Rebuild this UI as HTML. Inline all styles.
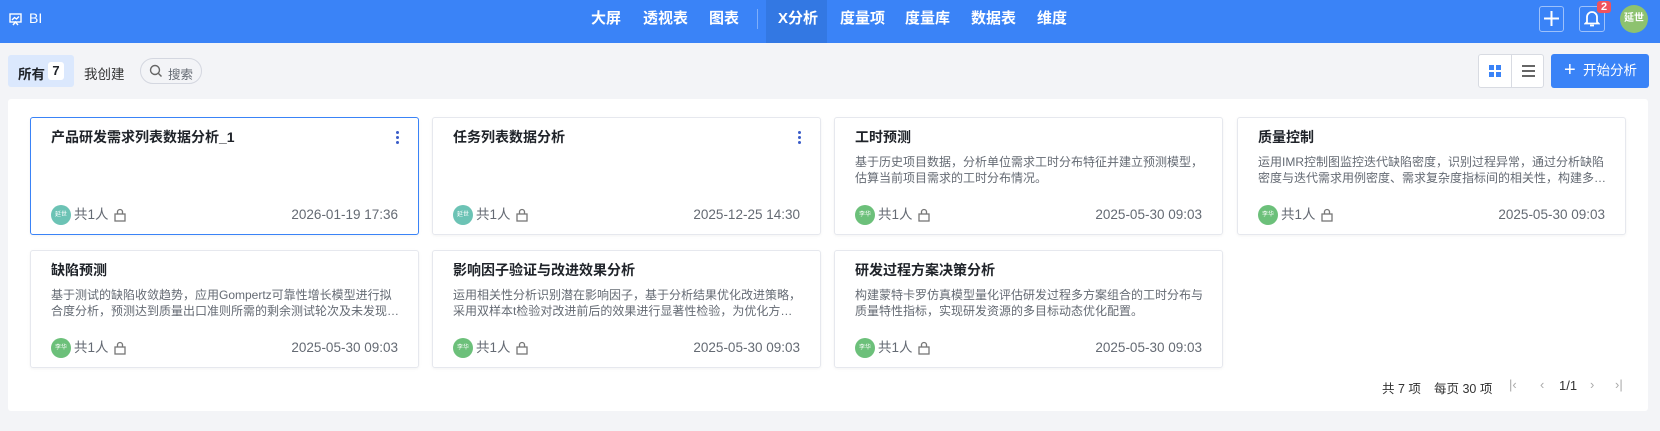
<!DOCTYPE html>
<html><head><meta charset="utf-8"><style>
*{box-sizing:border-box;margin:0;padding:0}
body{width:1660px;height:431px;background:#f3f4f7;font-family:"Liberation Sans","Noto Sans CJK SC",sans-serif;position:relative;overflow:hidden;color:#1f2329}
.hd{position:absolute;left:0;top:0;width:1660px;height:43px;background:#3a83f7;color:#fff}
.hd .nav{position:absolute;top:0;height:43px;line-height:38px;font-size:15px;font-weight:bold}
.abs{position:absolute}
.panel{position:absolute;left:8px;top:99px;width:1640px;height:312px;background:#fff;border-radius:3px}
.card{position:absolute;width:389px;height:118px;background:#fff;border:1px solid #e6e8ee;border-radius:3px;box-shadow:0 1px 3px rgba(0,0,0,.05)}
.card .t{position:absolute;left:20px;top:9px;font-size:14px;font-weight:bold;color:#1f2329}
.card .d{position:absolute;left:20px;right:16px;top:36px;font-size:12px;line-height:16px;color:#646a73;overflow:hidden;display:-webkit-box;-webkit-line-clamp:2;-webkit-box-orient:vertical}
.card .f{position:absolute;left:20px;right:20px;top:86px;height:22px;font-size:13.5px;color:#646a73;line-height:22px}
.av{display:inline-block;width:20px;height:20px;border-radius:50%;background:#6cc07a;color:#fff;font-size:6px;text-align:center;line-height:20px;vertical-align:middle;margin-right:3px}
.av.b{background:#6cc3b5}
.f .dt{position:absolute;right:0;top:0}
.lk{display:inline-block;vertical-align:middle;margin-left:4px}
.dots{position:absolute;right:19px;top:13px;width:3px}
.dots i{display:block;width:3px;height:3px;background:#3a5cc8;border-radius:50%;margin-bottom:2px}
</style></head><body>
<div class="hd">
 <svg class="abs" style="left:9px;top:13px" width="13" height="13" viewBox="0 0 13 13" fill="none" stroke="#fff" stroke-width="1.4"><rect x="1" y="1" width="11" height="8"/><path d="M3 7l2.5-2.5 2 1.5L10 3.5M4 12l2.5-3 2.5 3"/></svg>
 <div class="abs" style="left:29px;top:10px;font-size:14px">BI</div>
 <div class="nav" style="left:591px">大屏</div>
 <div class="nav" style="left:643px">透视表</div>
 <div class="nav" style="left:709px">图表</div>
 <div class="abs" style="left:757px;top:9px;width:1px;height:20px;background:rgba(255,255,255,.35)"></div>
 <div class="abs" style="left:766px;top:0;width:61px;height:43px;background:#3378e3"></div>
 <div class="nav" style="left:778px">X分析</div>
 <div class="nav" style="left:840px">度量项</div>
 <div class="nav" style="left:905px">度量库</div>
 <div class="nav" style="left:971px">数据表</div>
 <div class="nav" style="left:1037px">维度</div>
 <div class="abs" style="left:1539px;top:6px;width:25px;height:26px;border:1px solid rgba(255,255,255,.5);border-radius:3px"></div>
 <svg class="abs" style="left:1543px;top:10px" width="17" height="17"><path d="M8.5 1v15M1 8.5h15" stroke="#fff" stroke-width="2"/></svg>
 <div class="abs" style="left:1579px;top:6px;width:26px;height:26px;border:1px solid rgba(255,255,255,.5);border-radius:3px"></div>
 <svg class="abs" style="left:1584px;top:10px" width="16" height="17" fill="none" stroke="#fff" stroke-width="1.8"><path d="M3 12V7a5 5 0 0110 0v5l1.5 1.5h-13zM6 15.5h4"/></svg>
 <div class="abs" style="left:1597px;top:1px;width:14px;height:12px;background:#f0525c;border-radius:3px;font-size:11px;text-align:center;line-height:12px;font-weight:bold">2</div>
 <div class="abs" style="left:1620px;top:5px;width:28px;height:28px;border-radius:50%;background:#8dc26f;font-size:10px;text-align:center;line-height:28px;font-weight:bold">延世</div>
</div>
<div class="abs" style="left:8px;top:55px;width:66px;height:32px;background:#dbe8fd;border-radius:3px"></div>
<div class="abs" style="left:18px;top:63px;font-size:13.5px;font-weight:bold">所有</div>
<div class="abs" style="left:48px;top:62px;width:16px;height:18px;background:#fff;border-radius:3px;font-size:13px;text-align:center;line-height:18px;font-weight:bold">7</div>
<div class="abs" style="left:84px;top:63px;font-size:13.5px;color:#333">我创建</div>
<div class="abs" style="left:140px;top:58px;width:62px;height:26px;border:1px solid #d4d7e0;border-radius:13px"></div>
<svg class="abs" style="left:149px;top:64px" width="14" height="14" fill="none" stroke="#666" stroke-width="1.4"><circle cx="6" cy="6" r="4.5"/><path d="M9.5 9.5l3 3"/></svg>
<div class="abs" style="left:168px;top:64px;font-size:12.5px;color:#646a73">搜索</div>
<div class="abs" style="left:1478px;top:54px;width:66px;height:34px;background:#fff;border:1px solid #d8dbe2;border-radius:3px"></div>
<div class="abs" style="left:1511px;top:54px;width:1px;height:34px;background:#d8dbe2"></div>
<svg class="abs" style="left:1489px;top:65px" width="12" height="12" fill="#3a83f7"><rect x="0" y="0" width="5" height="5"/><rect x="7" y="0" width="5" height="5"/><rect x="0" y="7" width="5" height="5"/><rect x="7" y="7" width="5" height="5"/></svg>
<svg class="abs" style="left:1522px;top:65px" width="13" height="12" stroke="#333" stroke-width="1.5"><path d="M0 1h13M0 6h13M0 11h13"/></svg>
<div class="abs" style="left:1551px;top:54px;width:98px;height:34px;background:#3a83f7;border-radius:3px;color:#fff;font-size:13.5px;line-height:34px"><span style="font-size:20px;position:absolute;left:13px;top:-1px;font-weight:300">+</span><span style="position:absolute;left:32px">开始分析</span></div>
<div class="panel"></div>
<div class="card" style="left:30px;top:117px;border-color:#3a83f7">
 <div class="t">产品研发需求列表数据分析_1</div><div class="dots"><i></i><i></i><i></i></div>
 <div class="f"><span class="av b">延世</span>共1人<svg class="lk" width="14" height="14" fill="none" stroke="#777" stroke-width="1.3"><rect x="2" y="6" width="10" height="7"/><path d="M4.5 6V4a2.5 2.5 0 015 0v2"/></svg><span class="dt">2026-01-19 17:36</span></div></div>
<div class="card" style="left:432px;top:117px">
 <div class="t">任务列表数据分析</div><div class="dots"><i></i><i></i><i></i></div>
 <div class="f"><span class="av b">延世</span>共1人<svg class="lk" width="14" height="14" fill="none" stroke="#777" stroke-width="1.3"><rect x="2" y="6" width="10" height="7"/><path d="M4.5 6V4a2.5 2.5 0 015 0v2"/></svg><span class="dt">2025-12-25 14:30</span></div></div>
<div class="card" style="left:834px;top:117px">
 <div class="t">工时预测</div><div class="d">基于历史项目数据，分析单位需求工时分布特征并建立预测模型，估算当前项目需求的工时分布情况。</div>
 <div class="f"><span class="av">李华</span>共1人<svg class="lk" width="14" height="14" fill="none" stroke="#777" stroke-width="1.3"><rect x="2" y="6" width="10" height="7"/><path d="M4.5 6V4a2.5 2.5 0 015 0v2"/></svg><span class="dt">2025-05-30 09:03</span></div></div>
<div class="card" style="left:1237px;top:117px">
 <div class="t">质量控制</div><div class="d">运用IMR控制图监控迭代缺陷密度，识别过程异常，通过分析缺陷密度与迭代需求用例密度、需求复杂度指标间的相关性，构建多元回归模型进行预测分析。</div>
 <div class="f"><span class="av">李华</span>共1人<svg class="lk" width="14" height="14" fill="none" stroke="#777" stroke-width="1.3"><rect x="2" y="6" width="10" height="7"/><path d="M4.5 6V4a2.5 2.5 0 015 0v2"/></svg><span class="dt">2025-05-30 09:03</span></div></div>
<div class="card" style="left:30px;top:250px">
 <div class="t">缺陷预测</div><div class="d">基于测试的缺陷收敛趋势，应用Gompertz可靠性增长模型进行拟合度分析，预测达到质量出口准则所需的剩余测试轮次及未发现缺陷数量。</div>
 <div class="f"><span class="av">李华</span>共1人<svg class="lk" width="14" height="14" fill="none" stroke="#777" stroke-width="1.3"><rect x="2" y="6" width="10" height="7"/><path d="M4.5 6V4a2.5 2.5 0 015 0v2"/></svg><span class="dt">2025-05-30 09:03</span></div></div>
<div class="card" style="left:432px;top:250px">
 <div class="t">影响因子验证与改进效果分析</div><div class="d">运用相关性分析识别潜在影响因子，基于分析结果优化改进策略，采用双样本t检验对改进前后的效果进行显著性检验，为优化方案提供依据。</div>
 <div class="f"><span class="av">李华</span>共1人<svg class="lk" width="14" height="14" fill="none" stroke="#777" stroke-width="1.3"><rect x="2" y="6" width="10" height="7"/><path d="M4.5 6V4a2.5 2.5 0 015 0v2"/></svg><span class="dt">2025-05-30 09:03</span></div></div>
<div class="card" style="left:834px;top:250px">
 <div class="t">研发过程方案决策分析</div><div class="d">构建蒙特卡罗仿真模型量化评估研发过程多方案组合的工时分布与质量特性指标，实现研发资源的多目标动态优化配置。</div>
 <div class="f"><span class="av">李华</span>共1人<svg class="lk" width="14" height="14" fill="none" stroke="#777" stroke-width="1.3"><rect x="2" y="6" width="10" height="7"/><path d="M4.5 6V4a2.5 2.5 0 015 0v2"/></svg><span class="dt">2025-05-30 09:03</span></div></div>
<div class="abs" style="left:1382px;top:378px;font-size:12.5px;color:#333">共 7 项</div>
<div class="abs" style="left:1434px;top:378px;font-size:12.5px;color:#333">每页 30 项</div>
<div class="abs" style="left:1509px;top:377px;font-size:13px;color:#aaa">|‹</div>
<div class="abs" style="left:1540px;top:377px;font-size:13px;color:#aaa">‹</div>
<div class="abs" style="left:1559px;top:378px;font-size:13px;color:#333">1/1</div>
<div class="abs" style="left:1590px;top:377px;font-size:13px;color:#aaa">›</div>
<div class="abs" style="left:1615px;top:377px;font-size:13px;color:#aaa">›|</div>
</body></html>
